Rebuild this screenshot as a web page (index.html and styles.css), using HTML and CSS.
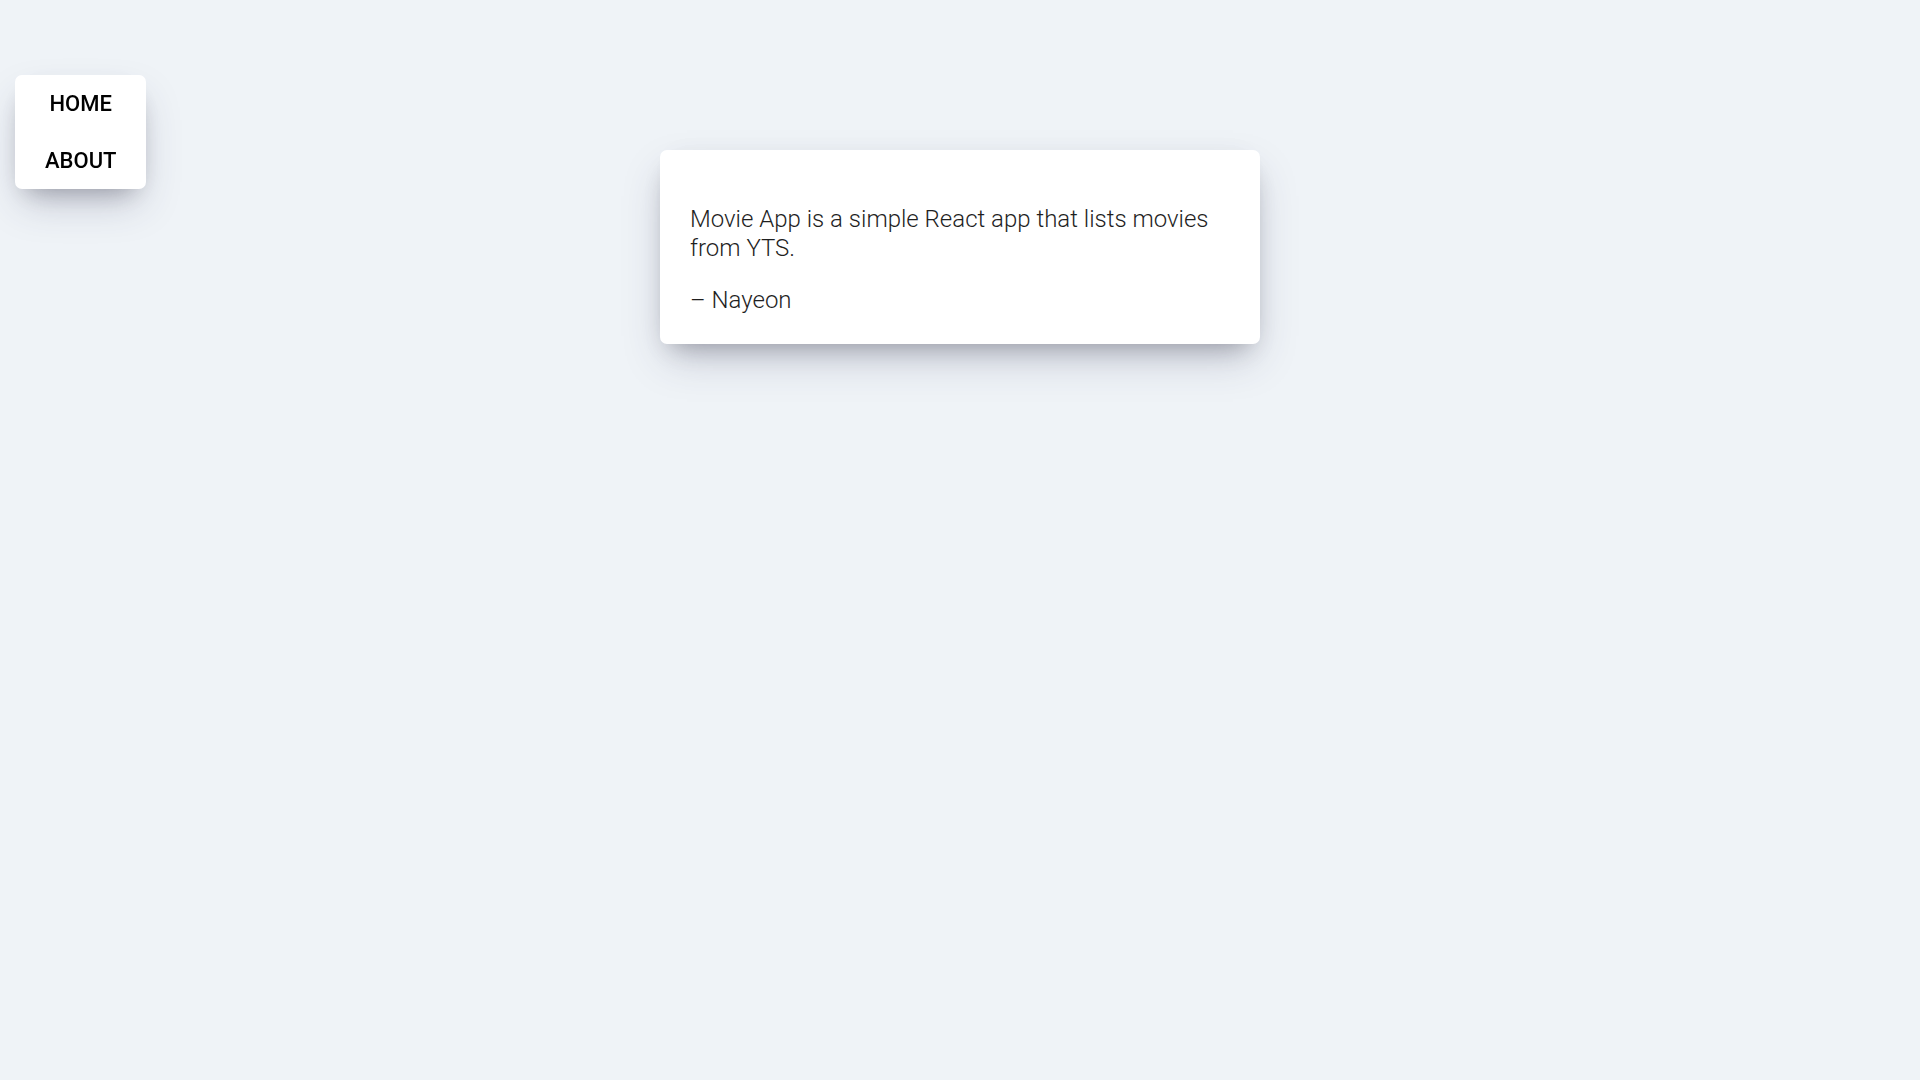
FILE: index.html
```html
<!DOCTYPE html>
<html lang="en">
<head>
<meta charset="utf-8">
<title>Movie App</title>
<link rel="stylesheet" href="styles.css">
</head>
<body>
<nav class="nav">
  <a class="nav__link" href="#">Home</a>
  <a class="nav__link" href="#">About</a>
</nav>
<main class="about">
  <p class="about__text">Movie App is a simple React app that lists movies from YTS.</p>
  <p class="about__text">– Nayeon</p>
</main>
</body>
</html>
```
FILE: styles.css
```css
* { box-sizing: border-box; }
html, body { margin: 0; padding: 0; }
body {
  background-color: #eff3f7;
  font-family: Roboto, "Liberation Sans", sans-serif;
  color: #1f1f1f;
  min-height: 1080px;
  padding-top: 150px;
}
.nav {
  position: fixed;
  z-index: 1;
  top: 75px;
  left: 15px;
  display: flex;
  flex-direction: column;
  align-items: center;
  gap: 29px;
  background-color: #fff;
  padding: 15px 30px 14px;
  border-radius: 7px;
  box-shadow: 0 19px 40px -7px rgba(50, 50, 93, 0.25), 0 12px 24px -12px rgba(0, 0, 0, 0.3), 0 -9px 24px -9px rgba(0, 0, 0, 0.025);
}
.nav__link {
  text-decoration: none;
  color: #000;
  text-transform: uppercase;
  font-size: 22px;
  font-weight: 500;
  line-height: 28px;
}
.about {
  width: 600px;
  margin: 0 auto;
  padding: 30px 30px 29px;
  background-color: #fff;
  border-radius: 7px;
  font-weight: 300;
  font-size: 24px;
  box-shadow: 0 19px 40px -7px rgba(50, 50, 93, 0.25), 0 12px 24px -12px rgba(0, 0, 0, 0.3), 0 -9px 24px -9px rgba(0, 0, 0, 0.025);
}
.about__text {
  margin: 23px 0;
  line-height: 29px;
}
.about__text:first-child { margin-top: 25px; }
.about__text:last-child { margin-bottom: 0; }
```
